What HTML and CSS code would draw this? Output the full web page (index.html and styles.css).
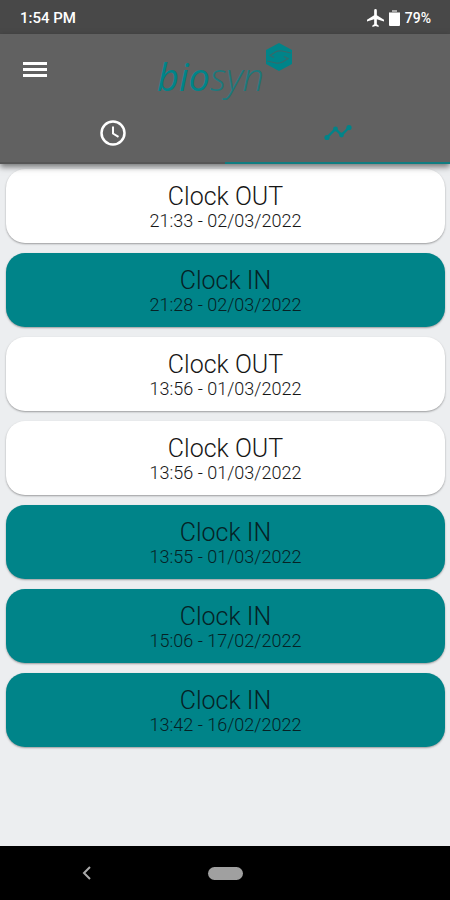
FILE: index.html
```html
<!DOCTYPE html>
<html lang="en">
<head>
<meta charset="utf-8">
<meta name="viewport" content="width=device-width, initial-scale=1">
<title>biosyn</title>
<link rel="stylesheet" href="styles.css">
</head>
<body>
<div class="app">
  <div class="status">
    <span class="time">1:54 PM</span>
    <div class="status-icons">
      <svg width="17" height="18" viewBox="2 2 19 20" fill="#fff"><path d="M21 16v-2l-8-5V3.500a1.500 1.500 0 0 0-3 0V9l-8 5v2l8-2.500V19l-2 1.500V22l3.500-1 3.500 1v-1.500L13 19v-5.500z"/></svg>
      <svg width="11" height="16" viewBox="0 0 11 16"><path fill="#aaa" d="M3 0h5v2h3v2H0V2h3z"/><path fill="#fff" d="M0 3h11v12a1 1 0 0 1-1 1H1a1 1 0 0 1-1-1z"/></svg>
      <span>79%</span>
    </div>
  </div>
  <header class="header">
    <div class="bar">
      <button class="menu" aria-label="Menu">
        <svg width="24" height="18" viewBox="0 0 24 18" fill="#fff"><path d="M0 1h24v3H0zM0 7h24v3H0zM0 13h24v3H0z"/></svg>
      </button>
      <div class="brand">
        <span class="brand-name"><span class="bio">bio</span><span class="syn">syn</span></span>
        <svg class="brand-mark" width="28" height="30" viewBox="0 0 28 30">
          <path fill="#008489" d="M14 1l13 7v14l-13 7L1 22V8z"/>
          <g fill="none" stroke="#37686a" stroke-width="1.200">
            <path d="M26 11l-9-2c-3-.6-5 0-7 1.200L5 13.500l4 2"/>
            <path d="M2 19l9 2c3 .6 5 0 7-1.200l5-3.300-4-2"/>
          </g>
        </svg>
      </div>
    </div>
    <nav class="tabs">
      <button class="tab" aria-label="Clock">
        <svg width="26" height="26" viewBox="0 0 26 26" fill="none" stroke="#fff"><circle cx="13" cy="13" r="11.500" stroke-width="2.500"/><path stroke-width="2" d="M13 6.500V13.500l5.500 3.300"/></svg>
      </button>
      <button class="tab active" aria-label="History">
        <svg width="28" height="16" viewBox="0 0 28 16"><path fill="none" stroke="#008489" stroke-width="2.300" d="M3 12.500L11.500 4l6 6L25 2.500"/><g fill="#008489"><circle cx="3" cy="12.500" r="2.600"/><circle cx="11.500" cy="4" r="2.400"/><circle cx="17.500" cy="10" r="2.400"/><circle cx="25" cy="2.600" r="2.600"/></g></svg>
      </button>
    </nav>
  </header>
  <main class="list">
    <article class="card"><h2>Clock OUT</h2><p>21:33 - 02/03/2022</p></article>
    <article class="card in"><h2>Clock IN</h2><p>21:28 - 02/03/2022</p></article>
    <article class="card"><h2>Clock OUT</h2><p>13:56 - 01/03/2022</p></article>
    <article class="card"><h2>Clock OUT</h2><p>13:56 - 01/03/2022</p></article>
    <article class="card in"><h2>Clock IN</h2><p>13:55 - 01/03/2022</p></article>
    <article class="card in"><h2>Clock IN</h2><p>15:06 - 17/02/2022</p></article>
    <article class="card in"><h2>Clock IN</h2><p>13:42 - 16/02/2022</p></article>
  </main>
  <footer class="sysnav">
    <button class="back" aria-label="Back"><svg width="10" height="14" viewBox="0 0 10 14"><path fill="none" stroke="#aaa" stroke-width="2" d="M8 1L2 7l6 6"/></svg></button>
    <button class="home" aria-label="Home"></button>
  </footer>
</div>
</body>
</html>
```
FILE: styles.css
```css
* { box-sizing: border-box; }
body { margin: 0; font-family: Roboto, sans-serif; color: #161616; background: #eceef0; }
button { border: 0; padding: 0; background: none; display: flex; align-items: center; justify-content: center; }
svg { display: block; }
h2, p { margin: 0; }

.app { min-height: 100vh; display: flex; flex-direction: column; }

.status {
  height: 34px;
  padding: 2px 19px 0 20px;
  display: flex;
  align-items: center;
  justify-content: space-between;
  background: #484848;
  color: #fff;
  font-size: 14px;
  font-weight: 500;
}
.time { font-size: 15px; }
.status-icons { display: flex; align-items: center; gap: 5px; }

.header { background: #616161; box-shadow: 0 3px 6px rgba(0, 0, 0, .5); position: relative; z-index: 1; }
.bar {
  height: 70px;
  display: grid;
  grid-template-columns: 70px 1fr 70px;
  align-items: center;
}
.menu { height: 48px; padding-top: 2px; }
.brand { display: flex; justify-content: center; align-items: flex-start; color: #008489; }
.brand-name {
  font-family: "Open Sans", sans-serif;
  font-style: italic;
  font-size: 38px;
  line-height: 40px;
  padding-top: 14px;
}
.bio { font-weight: 500; }
.syn { font-weight: 300; opacity: .7; }
.brand-mark { margin-left: 1px; }

.tabs { display: grid; grid-template-columns: 1fr 1fr; }
.tab { height: 60px; border-bottom: 2px solid #565656; }
.tab.active { border-bottom-color: #107d81; }

.list { flex: 1; padding: 5px 5px 20px 6px; display: flex; flex-direction: column; gap: 10px; }
.card {
  height: 74px;
  padding-top: 14px;
  border-radius: 19px;
  background: #fff;
  box-shadow: 0 1px 2px rgba(0, 0, 0, .35);
  text-align: center;
}
.card.in { background: #008489; color: #062225; }
.card h2 { font-size: 25px; line-height: 28px; font-weight: 300; }
.card p { font-size: 18px; line-height: 20px; font-weight: 300; }

.sysnav {
  height: 54px;
  background: #000;
  display: grid;
  grid-template-columns: 174px 1fr 174px;
  align-items: center;
  justify-items: center;
}
.home { width: 35px; height: 13px; border-radius: 7px; background: #a0a0a0; }
```
